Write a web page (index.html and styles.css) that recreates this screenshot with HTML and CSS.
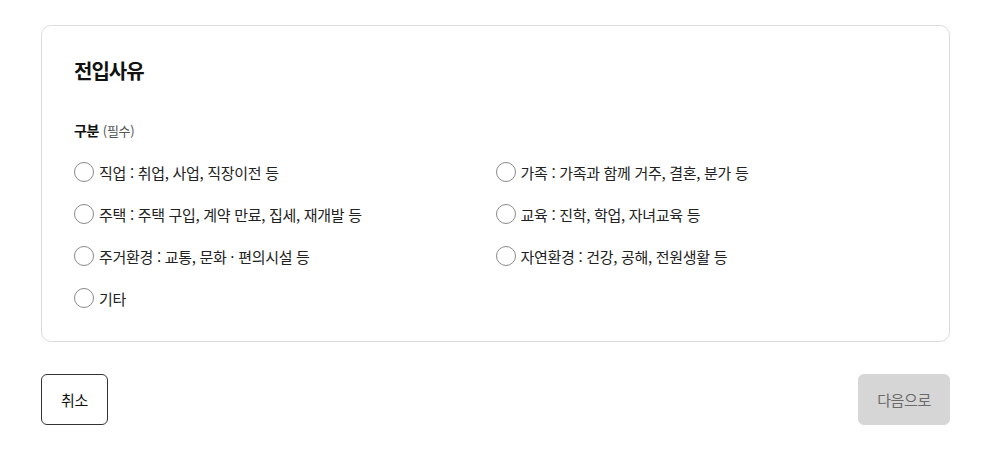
FILE: index.html
```html
<!DOCTYPE html>
<html lang="ko">
<head>
<meta charset="utf-8">
<link rel="stylesheet" href="styles.css">
</head>
<body>
<main class="page">
  <section class="card">
    <h2 class="card-title">전입사유</h2>
    <div class="field-label"><strong>구분</strong> <span class="req">(필수)</span></div>
    <div class="options">
      <label class="option"><span class="radio"></span><span class="opt-text">직업 : 취업, 사업, 직장이전 등</span></label>
      <label class="option"><span class="radio"></span><span class="opt-text">가족 : 가족과 함께 거주, 결혼, 분가 등</span></label>
      <label class="option"><span class="radio"></span><span class="opt-text">주택 : 주택 구입, 계약 만료, 집세, 재개발 등</span></label>
      <label class="option"><span class="radio"></span><span class="opt-text">교육 : 진학, 학업, 자녀교육 등</span></label>
      <label class="option"><span class="radio"></span><span class="opt-text">주거환경 : 교통, 문화 · 편의시설 등</span></label>
      <label class="option"><span class="radio"></span><span class="opt-text">자연환경 : 건강, 공해, 전원생활 등</span></label>
      <label class="option"><span class="radio"></span><span class="opt-text">기타</span></label>
    </div>
  </section>
  <div class="actions">
    <button class="btn btn-outline" type="button">취소</button>
    <button class="btn btn-disabled" type="button">다음으로</button>
  </div>
</main>
</body>
</html>
```
FILE: styles.css
```css
html, body {
  margin: 0;
  padding: 0;
  background: #ffffff;
}
body {
  font-family: "Noto Sans CJK KR", "Noto Sans", sans-serif;
  color: #111111;
}
.page {
  padding: 25px 50px 0 41px;
}
.card {
  border: 1px solid #dcdcdc;
  border-radius: 10px;
  padding: 30px 32px 32px 32px;
}
.card-title {
  margin: 0;
  font-size: 20px;
  line-height: 30px;
  font-weight: 700;
  letter-spacing: -1px;
  color: #111;
}
.field-label {
  margin-top: 34px;
  font-size: 14px;
  line-height: 20px;
  letter-spacing: -0.3px;
}
.field-label strong {
  font-weight: 700;
}
.req {
  font-size: 13px;
  color: #555;
}
.options {
  margin-top: 20px;
  display: grid;
  grid-template-columns: 1fr 1fr;
  row-gap: 20px;
}
.option {
  display: flex;
  align-items: center;
  height: 22px;
  gap: 5px;
  font-size: 15px;
  letter-spacing: -0.3px;
  color: #222;
}
.radio {
  width: 18px;
  height: 18px;
  border: 1px solid #8a8a8a;
  border-radius: 50%;
  background: #fff;
  flex: none;
}
.actions {
  margin-top: 32px;
  display: flex;
  justify-content: space-between;
}
.btn {
  height: 51px;
  border-radius: 6px;
  font-family: inherit;
  font-size: 15px;
  letter-spacing: -0.4px;
  padding: 0 12px;
}
.btn-outline {
  background: #fff;
  border: 1px solid #333;
  color: #111;
  width: 67px;
}
.btn-disabled {
  background: #d6d6d6;
  border: 1px solid #d6d6d6;
  color: #6b6b6b;
  width: 92px;
}
```
